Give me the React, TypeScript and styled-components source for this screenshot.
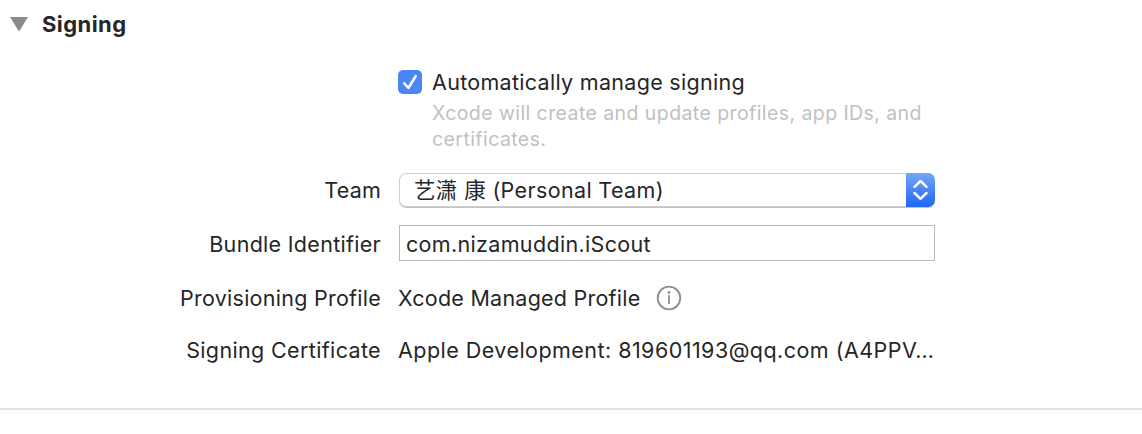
import React from 'react';
import styled, { createGlobalStyle } from 'styled-components';

const Global = createGlobalStyle`
  * { box-sizing: border-box; }
  body { margin: 0; background: #fff; color: #262626; font-family: Inter, "Noto Sans CJK SC", sans-serif; font-size: 21.5px; }
`;
const Panel = styled.main`
  height: 434px; overflow: hidden;
`;
const Section = styled.section`
  height: 410px; border-bottom: 2px solid #e3e3e3;
`;
const Header = styled.header`
  display: flex; align-items: center; gap: 14px; height: 48px; padding-left: 10px;
`;
const Title = styled.h2`
  margin: 0; font-size: 22px; font-weight: 700; letter-spacing: 0.42px; white-space: nowrap;
`;
const Row = styled.div<{ $h: number }>`
  display: grid; grid-template-columns: 381px 536px; column-gap: 18px; align-items: center; height: ${p => p.$h}px;
`;
const Label = styled.div`
  text-align: right; white-space: nowrap;
`;
const Text = styled.span<{ $track: number }>`
  display: inline-block; line-height: 26px; white-space: nowrap; letter-spacing: ${p => p.$track}px;
`;
const Auto = styled.div`
  display: flex; gap: 10px; padding: 21px 0 0 398px; height: 116px;
`;
const Check = styled.div`
  display: flex; align-items: center; justify-content: center; width: 24px; height: 24px; margin-top: 1px; border-radius: 5px; background: #4a86f6;
`;
const Hint = styled.div`
  font-size: 19.5px; line-height: 26px; letter-spacing: 0.42px; color: #c1c1c1; white-space: nowrap; padding-top: 5px;
`;
const Select = styled.div`
  display: flex; justify-content: space-between; align-items: center; height: 34px; padding-left: 15px; border-radius: 7px; overflow: hidden;
  box-shadow: inset 0 0 0 1px #cfcfcf, 0 1px 0 #c4c4c4;
`;
const Stepper = styled.div`
  display: flex; align-items: center; justify-content: center; width: 29px; height: 34px; background: linear-gradient(#74a5f6, #4a86f6 50%, #2166f5);
`;
const Field = styled.div`
  display: flex; align-items: center; height: 36px; margin-bottom: 2px; padding: 2px 0 0 6px; border: 1px solid #b9b9b9;
`;
const Value = styled.div`
  display: flex; align-items: center; gap: 15px; margin-left: -1px;
`;

export default function App() {
  return <><Global /><Panel><Section>
    <Header>
      <svg width="18" height="16"><path d="M0 1h18L9 15.5z" fill="#8a8a8a" /></svg>
      <Title>Signing</Title>
    </Header>
    <Auto>
      <Check><svg width="24" height="24" fill="none" stroke="#fff" strokeWidth="2.4" strokeLinecap="round" strokeLinejoin="round"><path d="M6.2 13.2l4.2 4.8L17.8 6" /></svg></Check>
      <div><Text $track={0.3}>Automatically manage signing</Text>
        <Hint>Xcode will create and update profiles, app IDs, and<br />certificates.</Hint></div>
    </Auto>
    <Row $h={52}><Label><Text $track={0.2}>Team</Text></Label>
      <Select><Text $track={0.36}>艺潇 康 (Personal Team)</Text><Stepper><svg width="15" height="22" fill="none" stroke="#fff" strokeWidth="2.5" strokeLinecap="round" strokeLinejoin="round"><path d="M1.5 7.8L7.5 2 13.5 7.8M1.5 14l6 5.8 6-5.8" /></svg></Stepper></Select></Row>
    <Row $h={55}><Label><Text $track={0.3}>Bundle Identifier</Text></Label><Field><Text $track={0.33}>com.nizamuddin.iScout</Text></Field></Row>
    <Row $h={54}><Label><Text $track={0.26}>Provisioning Profile</Text></Label><Value><Text $track={0.24}>Xcode Managed Profile</Text>
      <svg width="26" height="26" fill="none" stroke="#8c8c8c" strokeWidth="1.8"><circle cx="13" cy="13" r="11.3" /><path d="M13 10.3v8.7" /><circle cx="13" cy="7.4" r="1.3" fill="#8c8c8c" stroke="none" /></svg></Value></Row>
    <Row $h={50}><Label><Text $track={0.36}>Signing Certificate</Text></Label><Value><Text $track={0.46}>Apple Development: 819601193@qq.com (A4PPV…</Text></Value></Row>
  </Section></Panel></>;
}
